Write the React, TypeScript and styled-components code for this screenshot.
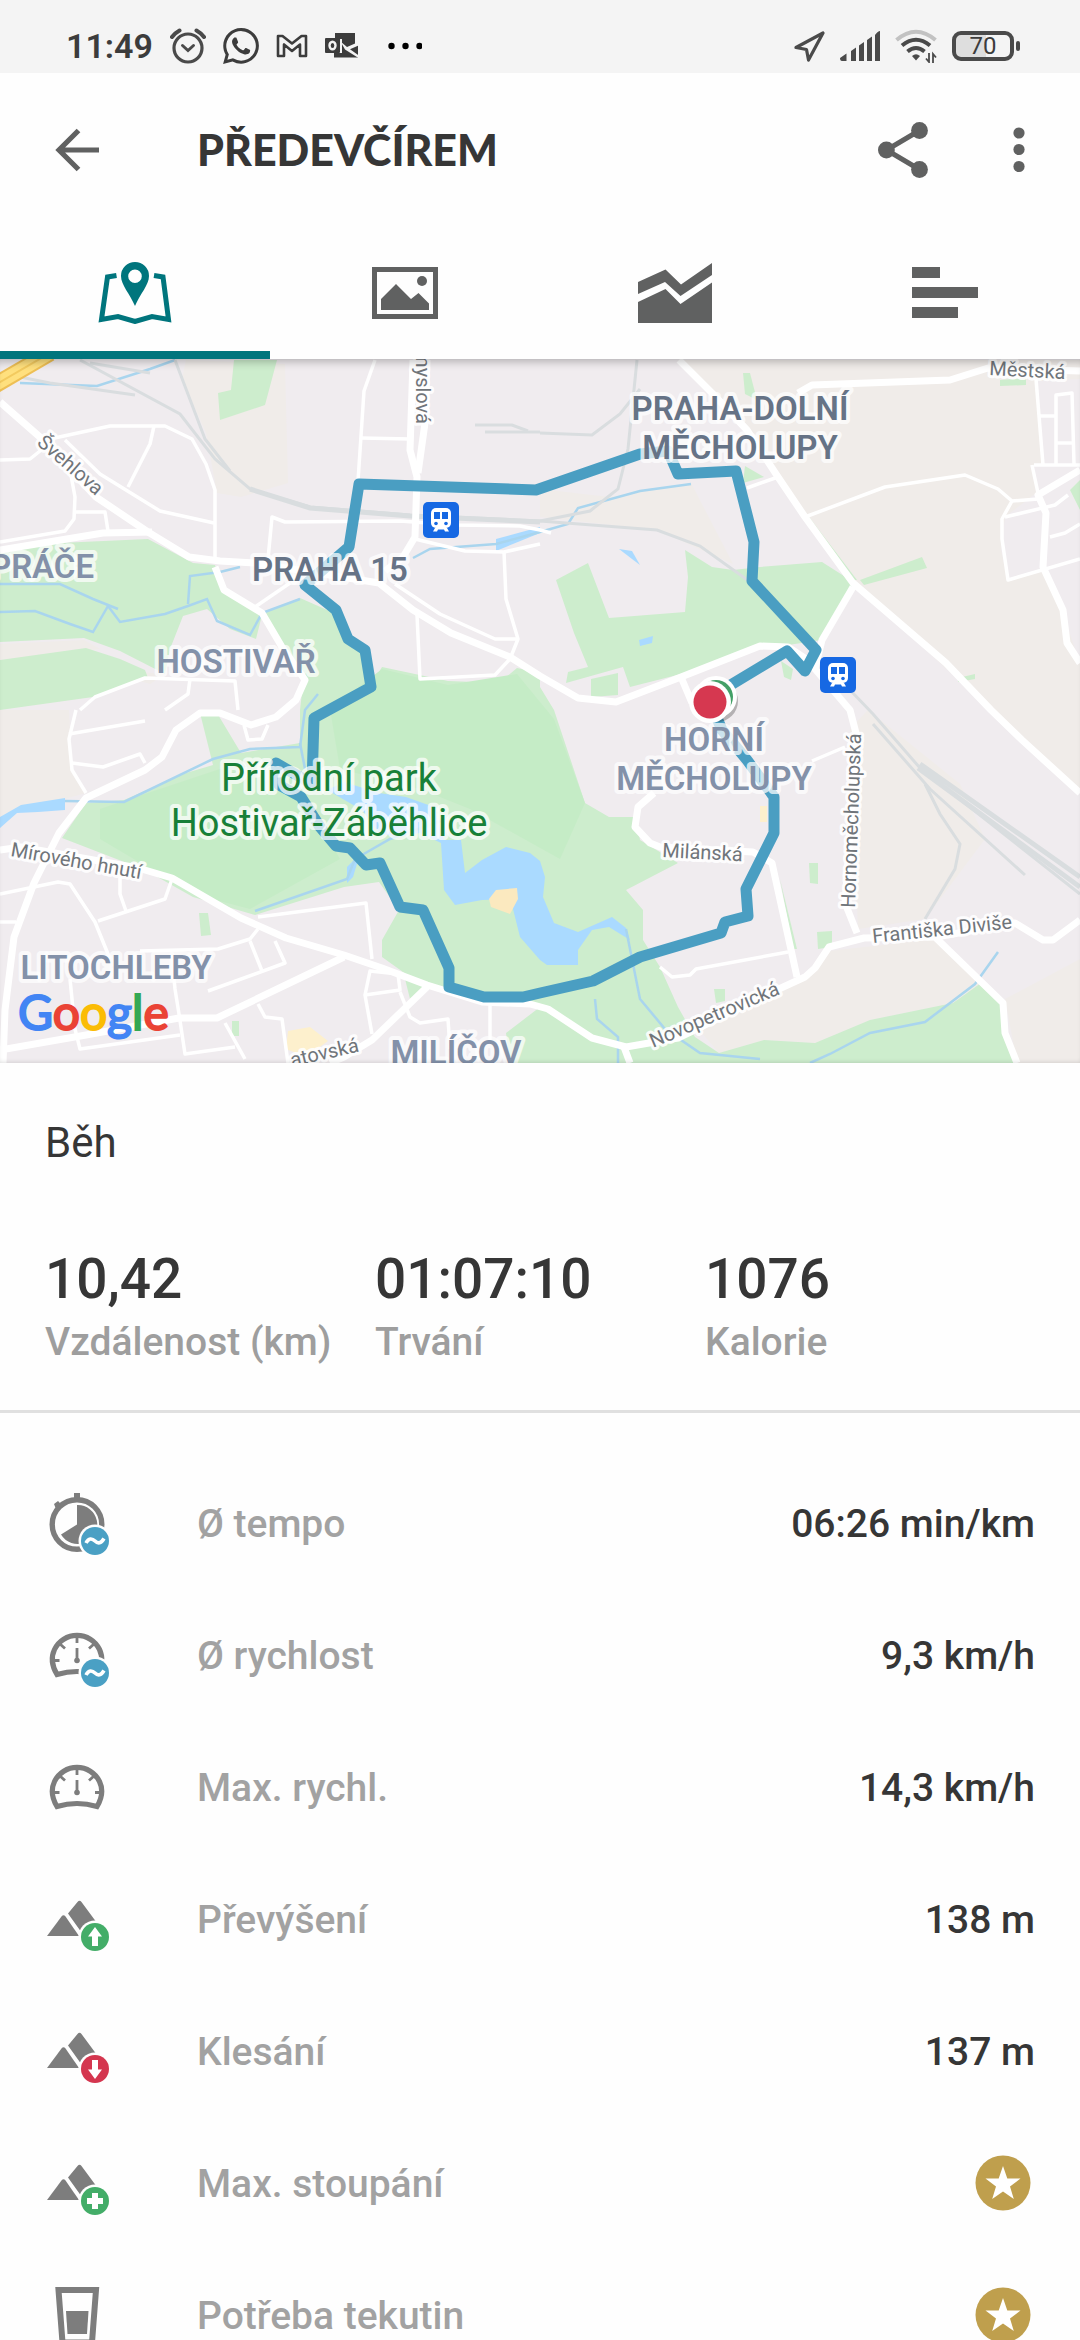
import React from "react";
import styled, { createGlobalStyle } from "styled-components";

const GlobalStyle = createGlobalStyle`
  *, *::before, *::after { box-sizing: border-box; }
  body { margin: 0; background: #fefefe; font-family: Roboto, "Noto Sans", sans-serif; }
`;

const Screen = styled.div`
  height: 100vh;
  display: flex;
  flex-direction: column;
  overflow: hidden;
  background: #fefefe;
  color: #363636;
`;

const StatusBar = styled.div`
  flex: none;
  display: flex;
  align-items: center;
  justify-content: space-between;
  height: 73px;
  padding: 19px 60px 0 66px;
  background: #f4f4f4;
  color: #3c3c3c;
`;

const StatusGroup = styled.div<{ $gap: number }>`
  display: flex;
  align-items: center;
  gap: ${(p) => p.$gap}px;
  svg { display: block; }
`;

const Clock = styled.span`
  font-size: 34px;
  line-height: 40px;
  font-weight: 600;
`;

const Overflow = styled.span`
  padding-left: 12px;
`;

const Battery = styled.span`
  display: flex;
  align-items: center;
  gap: 2px;
  &::after {
    content: "";
    width: 4px;
    height: 10px;
    border-radius: 2px;
    background: #4a4a4a;
  }
`;

const BatteryBody = styled.span`
  display: flex;
  align-items: center;
  justify-content: center;
  width: 62px;
  height: 30px;
  border: 4px solid #4a4a4a;
  border-radius: 9px;
  background: linear-gradient(90deg, #dedede 55%, #f4f4f4 55%);
  font-size: 24px;
  line-height: 24px;
`;

const AppBar = styled.header`
  flex: none;
  display: flex;
  align-items: center;
  height: 154px;
  padding: 0 36px 0 44px;
`;

const IconButton = styled.button<{ $width: number }>`
  flex: none;
  display: flex;
  align-items: center;
  justify-content: center;
  width: ${(p) => p.$width}px;
  height: 66px;
  padding: 0;
  border: 0;
  background: none;
  color: #606161;
  cursor: pointer;
`;

const Title = styled.h1`
  flex: 1;
  margin: 0 0 0 87px;
  font-family: Lato, Roboto, sans-serif;
  font-size: 43px;
  line-height: 52px;
  font-weight: 900;
  color: #363636;
`;

const Actions = styled.div`
  display: flex;
  gap: 58px;
`;

const Tabs = styled.div`
  flex: none;
  display: grid;
  grid-template-columns: repeat(4, 1fr);
  height: 132px;
`;

const Tab = styled.button<{ $active?: boolean }>`
  display: flex;
  align-items: center;
  justify-content: center;
  padding: 0;
  border: 0;
  background: none;
  color: ${(p) => (p.$active ? "#00757d" : "#606161")};
  box-shadow: ${(p) => (p.$active ? "inset 0 -8px #00757d" : "none")};
  cursor: pointer;
`;

const MapPanel = styled.div`
  flex: none;
  position: relative;
  height: 704px;
  overflow: hidden;
  background: #f0ecef;
  svg { display: block; width: 100%; height: 100%; }
  &::after {
    content: "";
    position: absolute;
    inset: 0;
    pointer-events: none;
    box-shadow: inset 0 9px 8px -6px rgba(0, 0, 0, 0.25), inset 0 -4px 4px -3px rgba(0, 0, 0, 0.12);
  }
`;

const District = styled.text<{ $tone?: string }>`
  font: 600 33px Roboto, "Noto Sans", sans-serif;
  fill: ${(p) => p.$tone ?? "#8391a9"};
  stroke: rgba(255, 255, 255, 0.72);
  stroke-width: 8px;
  stroke-linejoin: round;
  paint-order: stroke;
  text-anchor: middle;
`;

const ParkName = styled(District)`
  font-weight: 400;
  font-size: 38px;
  fill: #188038;
`;

const Street = styled.text`
  font: 400 20px Roboto, "Noto Sans", sans-serif;
  fill: #70757a;
  stroke: rgba(255, 255, 255, 0.9);
  stroke-width: 6px;
  stroke-linejoin: round;
  paint-order: stroke;
`;

const Wordmark = styled.text`
  font: 400 48px Lato, Roboto, sans-serif;
  stroke-width: 2px;
`;

const Summary = styled.section`
  flex: none;
  padding: 54px 45px 41px;
  border-bottom: 3px solid #e0e0e0;
`;

const Sport = styled.h2`
  margin: 0 0 78px;
  font-size: 42px;
  line-height: 52px;
  font-weight: 400;
`;

const Totals = styled.dl`
  display: grid;
  grid-template-columns: repeat(3, 1fr);
  margin: 0;
`;

const Total = styled.div`
  display: flex;
  flex-direction: column-reverse;
  gap: 4px;
  white-space: nowrap;
`;

const TotalLabel = styled.dt`
  font-size: 39px;
  line-height: 54px;
  font-weight: 500;
  color: #9e9e9e;
`;

const TotalValue = styled.dd`
  margin: 0;
  font-size: 55px;
  line-height: 64px;
  font-weight: 500;
`;

const Details = styled.ul`
  flex: 1;
  min-height: 0;
  margin: 0;
  padding: 45px 45px 0;
  overflow-y: auto;
  scrollbar-width: none;
  list-style: none;
`;

const Detail = styled.li`
  display: flex;
  align-items: center;
  height: 132px;
  font-size: 39px;
  line-height: 48px;
  font-weight: 500;
  svg { flex: none; display: block; }
`;

const DetailLabel = styled.span`
  flex: 1;
  margin-left: 88px;
  color: #a2a2a2;
`;

/* ---------- status icons ---------- */

const AlarmIcon = () => (
  <svg width="36" height="36" viewBox="0 0 36 36" fill="none" stroke="#4a4a4a" strokeWidth="3.2" strokeLinecap="round">
    <circle cx="18" cy="20" r="14" />
    <path d="M12.5 17.5l5.5 5 5.500-5" strokeWidth="3" />
    <path d="M2 9q3-4 7.500-6.500M34 9q-3-4-7.500-6.500" strokeWidth="4" />
  </svg>
);

const WhatsAppIcon = () => (
  <svg width="36" height="36" viewBox="0 0 24 24" fill="#3c3c3c">
    <path d="M17.47 14.38c-.3-.15-1.760-.87-2.030-.97-.27-.1-.47-.15-.67.15-.2.300-.77.970-.94 1.160-.17.200-.35.230-.64.080-.3-.15-1.260-.46-2.390-1.480-.88-.79-1.480-1.760-1.650-2.060-.17-.3-.02-.46.13-.6.130-.14.300-.35.440-.53.150-.17.200-.3.300-.5.100-.2.050-.37-.02-.52-.08-.15-.67-1.610-.92-2.210-.24-.58-.49-.5-.67-.51h-.57c-.2 0-.52.070-.79.370-.27.300-1.040 1.020-1.040 2.480s1.060 2.880 1.210 3.070c.15.200 2.100 3.200 5.080 4.490.71.310 1.260.490 1.690.630.710.230 1.360.190 1.870.120.570-.09 1.760-.72 2.010-1.410.25-.69.250-1.290.17-1.410-.07-.13-.27-.2-.57-.35M12.050 21.790a9.870 9.870 0 0 1-5.030-1.380l-.36-.21-3.740.980 1-3.650-.24-.37a9.860 9.860 0 1 1 8.370 4.630m8.410-18.300A11.820 11.820 0 0 0 12.050 0C5.500 0 .16 5.340.16 11.890c0 2.100.550 4.140 1.590 5.950L.06 24l6.300-1.650a11.880 11.880 0 0 0 5.690 1.450c6.550 0 11.890-5.340 11.890-11.890a11.820 11.820 0 0 0-3.480-8.420" />
  </svg>
);

const MailIcon = () => (
  <svg width="32" height="24" viewBox="0 0 32 24" fill="none" stroke="#3c3c3c" strokeWidth="2.6" strokeLinejoin="round">
    <path d="M2 2h4.500L16 9.500 25.500 2H30v20h-6V10.500L16 17l-8-6.500V22H2z" />
  </svg>
);

const OutlookIcon = () => (
  <svg width="34" height="28" viewBox="0 0 34 28">
    <path d="M10 1h20v12l3-1.500v14H9V21h8V7h-7z" fill="#3c3c3c" />
    <path d="M15.500 9.500 22 15l11.500-5v3.500L25 17.200l8.500 6V26L20 17.500z" fill="#f4f4f4" />
    <rect x="0" y="6" width="15" height="15" rx="1" fill="#3c3c3c" />
    <ellipse cx="7.500" cy="13.500" rx="3" ry="3.800" fill="none" stroke="#f4f4f4" strokeWidth="2.400" />
  </svg>
);

const MoreDots = () => (
  <svg width="34" height="8" viewBox="0 0 34 8">
    <circle cx="3.500" cy="4" r="3.200" /><circle cx="17.500" cy="4" r="3.200" /><circle cx="31.500" cy="4" r="3.200" />
  </svg>
);

const LocationIcon = () => (
  <svg width="31" height="31" viewBox="0 0 31 31" fill="none" stroke="#4a4a4a" strokeWidth="3.200" strokeLinejoin="round">
    <path d="M2 16.500 29 2 14.500 29 12.500 18.500z" />
  </svg>
);

const SignalIcon = () => (
  <svg width="40" height="30" viewBox="0 0 40 30" fill="#4a4a4a">
    <path d="M0 27l6.500-4.500V30H2q-2 0-2-3zM11 20l5-3.500V30h-5zM19 14.500l5-3.500V30h-5zM27 9l5-3.500V30h-5zM35 4q3-4 5-4v30h-5z" />
  </svg>
);

const WifiIcon = () => (
  <svg width="42" height="34" viewBox="0 0 42 34" fill="none" stroke="#4a4a4a" strokeWidth="4">
    <path d="M1.500 11Q21-5.500 40.500 11" stroke="#c2c2c2" />
    <path d="M7 16.500q14-11.500 28 0" />
    <path d="M12.500 22.500q8.500-7 17 0" />
    <path d="M17 27q4-3.500 8 0l-4 4.500z" fill="#4a4a4a" stroke="none" />
    <path d="M34 24v9l-3-3.500M38 34v-9l3 3.500" strokeWidth="1.800" />
  </svg>
);

/* ---------- toolbar and tab icons ---------- */

const BackIcon = () => (
  <svg width="44" height="44" viewBox="0 0 44 44" fill="none" stroke="currentColor" strokeWidth="5.200">
    <path d="M23.500 2.500 4 22l19.500 19.500M4 22h40" />
  </svg>
);

const ShareIcon = () => (
  <svg width="50" height="56" viewBox="0 0 50 56" fill="currentColor">
    <path d="M41.500 8.500 8.500 28l33 19.500" fill="none" stroke="currentColor" strokeWidth="5" />
    <circle cx="41.500" cy="8.500" r="8.400" /><circle cx="8.400" cy="28" r="8.400" /><circle cx="41.500" cy="47.500" r="8.400" />
  </svg>
);

const KebabIcon = () => (
  <svg width="12" height="46" viewBox="0 0 12 46" fill="currentColor">
    <circle cx="6" cy="6" r="5.600" /><circle cx="6" cy="22.500" r="5.600" /><circle cx="6" cy="39.500" r="5.600" />
  </svg>
);

const MapIcon = () => (
  <svg width="74" height="62" viewBox="0 0 74 62">
    <path d="M18.500 13.500 9.500 15 3.500 57.500 20 54.500 37 59.500 54 54.500 70.500 57.500 65 15 56 13.500" fill="none" stroke="currentColor" strokeWidth="5" />
    <path fillRule="evenodd" fill="currentColor" d="M37 0a14 14 0 0 1 14 14c0 9-9 18-14 30-5-12-14-21-14-30A14 14 0 0 1 37 0zm0 7.500a6.800 6.800 0 1 0 0 13.600 6.800 6.800 0 0 0 0-13.600z" />
  </svg>
);

const PictureIcon = () => (
  <svg width="66" height="52" viewBox="0 0 66 52" fill="currentColor">
    <rect x="2.500" y="2.500" width="61" height="47" fill="none" stroke="currentColor" strokeWidth="5" />
    <path d="M9 43V32L24 17 39 32 46.500 26 57 36.500V43z" /><circle cx="50" cy="14" r="5" />
  </svg>
);

const ChartIcon = () => (
  <svg width="74" height="62" viewBox="0 0 74 62" fill="currentColor">
    <path d="M0 20 27.500 7.500 43 22.500 74 1V13L42.500 34 27 20 0 32z" />
    <path d="M0 40 27.500 27 42.500 42 74 20.500V61H0z" />
  </svg>
);

const BarsIcon = () => (
  <svg width="66" height="52" viewBox="0 0 66 52" fill="currentColor">
    <path d="M0 0h28v11H0zM0 20h66v11H0zM0 40h46v11H0z" />
  </svg>
);

/* ---------- detail icons ---------- */

type BadgeKind = "average" | "up" | "down" | "plus";

const badgeColors: Record<BadgeKind, string> = { average: "#4aa0c4", up: "#43ad68", down: "#d4364f", plus: "#43ad68" };

const badgeMarks: Record<BadgeKind, React.ReactNode> = {
  average: <path d="M41 51c2.500-5 6-5 9-2s6 2.500 9-2.500" fill="none" stroke="#fff" strokeWidth="3.600" />,
  up: <path d="M50 39l7 9.500h-4V58h-6v-9.500h-4z" fill="#fff" />,
  down: <path d="M50 59l7-9.500h-4V40h-6v9.500h-4z" fill="#fff" />,
  plus: <path d="M47 41h6v5h5v6h-5v5h-6v-5h-5v-6h5z" fill="#fff" />,
};

const Badge = ({ kind }: { kind: BadgeKind }) => (
  <>
    <circle cx="50" cy="49" r="16.500" fill="#fefefe" />
    <circle cx="50" cy="49" r="14" fill={badgeColors[kind]} />
    {badgeMarks[kind]}
  </>
);

const DetailSvg = ({ children }: { children: React.ReactNode }) => (
  <svg width="64" height="64" viewBox="0 0 64 64" fill="#7d7d7d">{children}</svg>
);

const StopwatchIcon = () => (
  <DetailSvg>
    <circle cx="32" cy="32.500" r="24.800" fill="none" stroke="#7d7d7d" strokeWidth="5.400" />
    <path d="M29 1h6v5h-6zM9 12l4-3 3 3-5 5z" />
    <path d="M32 32.500V13a19.500 19.500 0 1 1-16 29.500z" />
    <Badge kind="average" />
  </DetailSvg>
);

const GaugeIcon = ({ badge }: { badge?: BadgeKind }) => (
  <DetailSvg>
    <path d="M12 50.500Q4 37 9.500 25.500A25 25 0 0 1 54.500 25.500Q60 37 52 50.500Q32 44.500 12 50.500z" fill="none" stroke="#7d7d7d" strokeWidth="5.200" />
    <path d="M32 13v6M6 36.500h8.500M50 36.500h8M15 20l5 4.500M49 20l-5 4.500M32 24v12" stroke="#7d7d7d" strokeWidth="2.800" />
    <circle cx="32" cy="36.500" r="2.800" />
    {badge && <Badge kind={badge} />}
  </DetailSvg>
);

const MountainIcon = ({ badge }: { badge: BadgeKind }) => (
  <DetailSvg>
    <path d="M2 48 16.500 28.500q2-2.500 4 0L34 48z" />
    <path d="M23 25.500 32.500 14q2-2.500 4 0L52 35 35.500 43z" />
    <Badge kind={badge} />
  </DetailSvg>
);

const GlassIcon = () => (
  <DetailSvg>
    <path d="M13.500 6h37.500L47 58.500H17.500z" fill="none" stroke="#7d7d7d" strokeWidth="6" />
    <path d="M21 27h22.500L42 50H22.500z" />
  </DetailSvg>
);

const PremiumStar = () => (
  <svg width="64" height="64" viewBox="0 0 64 64" role="img" aria-label="Premium">
    <circle cx="32" cy="31" r="27.500" fill="#bf9f4d" />
    <path d="M32 14l4.300 12.500H49.500L39 34.500l3.800 12.500L32 39.500 21.200 47 25 34.500 14.500 26.500h13.200z" fill="#fff" />
  </svg>
);

/* ---------- map ---------- */

const parks = [
  "0,193 59,184 148,180 193,204 215,206 222,229 248,248 262,256 256,280 230,270 207,250 183,257 170,290 165,315 120,292 84,279 0,283",
  "0,301 86,289 120,300 145,311 148,319 93,338 0,351",
  "265,254 300,239 334,254 344,281 365,291 374,321 382,308 448,322 499,324 517,309 540,314 540,328 554,351 585,444 609,458 636,458 640,481 678,504 626,531 643,551 643,581 660,608 678,648 695,678 719,694 764,681 815,684 870,661 953,644 981,624 1001,644 1005,674 1017,704 510,704 506,674 540,648 484,645 448,634 410,618 382,598 382,581 399,551 379,523 344,528 255,556 193,538 145,511 62,479 86,444 124,441 186,414 213,406 200,354 217,354 241,394 300,384 300,351 303,324 282,284",
  "556,221 588,204 609,259 685,253 688,218 685,191 712,208 733,211 760,208 822,203 855,224 822,281 788,286 760,288 685,314 630,328 623,308 566,324 568,313 588,308 574,274",
  "234,1 277,1 265,46 220,61 218,34 231,31",
  "591,320 618,314 618,336 591,338",
  "743,14 750,14 757,41 745,35",
  "745,107 764,118 743,124",
  "809,158 857,221 850,221 809,164",
  "860,221 922,198 927,209 864,226",
  "1070,131 1080,121 1080,151",
  "1000,21 1026,19 1026,26 1000,27",
  "781,302 793,310 791,321 784,318",
  "958,319 975,315 975,320 958,323",
  "199,554 208,554 211,576 201,577",
  "817,573 832,572 832,588 818,590",
  "809,504 818,504 818,525 810,524",
  "714,630 725,630 725,642 716,644",
  "780,520 797,590 793,590",
  "405,620 427,627 410,640",
  "232,662 239,662 239,677 232,677",
];

const fields = [
  "186,1 285,5 288,124 241,138 217,134 206,74 182,20",
  "679,1 1080,1 1080,20 1036,22 1043,105 1034,106 1036,134 1005,158 1001,191 1008,221 1043,211 1063,254 1080,305 1080,434 991,351 853,224 790,135 747,71",
  "609,138 691,124 733,205 657,171 540,158 540,130",
  "0,351 69,351 72,411 86,434 0,458",
  "868,351 960,425 985,480 925,560 858,570 850,370",
  "829,592 936,580 1003,644 953,644 870,661 815,684 764,681 719,694 690,660 797,625",
  "1005,640 1080,600 1080,704 1017,704",
  "0,285 84,281 100,290 0,301",
  "100,310 165,315 150,325",
];

const lakes = [
  "327,431 344,423 379,434 406,438 434,448 444,481 461,481 465,514 482,501 506,488 530,494 540,502 545,518 543,538 554,564 578,573 612,558 626,569 630,581 609,568 592,571 578,591 578,606 547,606 540,601 520,578 513,550 513,540 482,541 455,546 444,531 441,484 420,474 396,478 379,474 362,451",
  "0,458 21,446 65,439 65,451 38,453 17,454 0,469",
  "619,190 632,192 640,206 632,200",
  "639,281 653,277 652,284 640,287",
  "496,180 540,168 540,174 496,192",
  "347,508 360,495 353,518 347,524",
];

const streams = [
  "0,253 35,252 70,265 93,273 108,247 120,263 165,255 188,247 207,240 217,262 250,276 262,254 300,240",
  "0,225 60,225 93,240 118,250",
  "188,245 190,217 220,213 240,208",
  "20,24 97,27 150,10 175,1",
  "413,199 430,190 496,185 540,173 568,165 578,149 640,132 691,125",
  "65,442 124,443 213,400 250,390 300,388 305,351 318,335",
  "441,462 390,480 355,500 347,520 255,552",
  "626,570 640,640 665,670 700,694 760,700",
  "595,640 597,660 618,678 618,704",
  "998,593 975,625 925,663 870,674 830,695 810,704",
  "300,384 305,410",
];

const rails = [
  "80,1 180,55 215,100 250,130 310,148 410,156 540,162 657,171 700,187 760,230",
  "175,1 205,80 230,112",
  "0,14 50,24 135,36",
  "90,4 150,14",
  "637,1 628,90 618,130 590,152 540,162",
  "540,74 592,76 620,55 640,30",
  "475,66 512,66 528,72",
  "485,73 540,73",
  "760,230 830,310 873,355 920,409 1080,535",
  "873,365 930,430 1025,516",
  "925,425 940,455 960,485 955,510 925,560",
];

const mainRoads = [
  "0,43 41,79 96,138 148,173 189,198 220,202 255,204 379,224 413,251 451,274 510,298 540,317 578,339 616,343 681,318 760,287 788,288 812,304",
  "0,191 103,174 152,173",
  "413,1 410,91 417,118 415,178 403,198 385,212",
  "427,1 425,64 418,114",
  "215,208 224,231 262,254 282,288 305,321 296,341 276,358 251,366 220,354 200,354 176,371 162,398 145,411 86,439 59,474 34,524 14,578 5,651 3,704",
  "0,491 21,488 138,509 172,519 241,559 286,579 344,596 382,609 427,626 482,643 530,645 548,650 592,679 626,688 678,679 781,629 805,618 815,609 829,588 864,579 936,578 1015,564 1043,581 1053,581 1080,561",
  "0,691 86,676 179,659 217,659 344,598",
  "427,628 372,681 344,698 330,704",
  "679,1 712,34 747,71 778,118 805,158 853,224 946,304 991,351 1022,381 1080,434",
  "853,228 822,281 815,310 850,351 857,378 845,544 857,574",
  "798,34 812,26 950,21 988,9 1080,12",
  "1080,111 1038,136 1046,154 1043,208 1063,251 1067,284 1080,304",
  "654,434 638,448 635,468 650,484 660,488 753,493 772,504 797,618",
  "936,579 1003,644 1005,674 1017,704",
  "681,318 692,344",
  "624,688 630,704",
];

const sideRoads = [
  "50,80 110,67 165,67 192,80 206,105 215,131 215,204",
  "65,81 100,115 160,152 214,164",
  "154,67 150,85 128,128",
  "0,101 30,100 45,88",
  "68,100 75,138 74,160 65,172 0,183",
  "76,153 105,153 108,172",
  "375,1 364,32 358,122",
  "361,79 410,80",
  "268,200 272,158 285,163 400,162 455,166 520,167 540,171 551,174",
  "415,180 465,192 504,193 540,185",
  "504,193 506,240 518,280 510,300",
  "518,280 495,280 440,255 395,225",
  "417,256 420,320 495,316 510,300",
  "255,248 290,224",
  "80,351 95,338 145,319 235,322 238,351",
  "190,320 188,335 165,351",
  "69,375 145,362",
  "76,351 69,380 72,411 86,434",
  "72,404 103,408 140,395 145,404",
  "244,366 248,381 262,380 268,366",
  "0,535 58,523 70,525 95,563 110,600",
  "120,518 120,535 126,552",
  "98,562 165,540 172,520",
  "0,563 16,563",
  "140,592 218,590 250,580 258,570",
  "208,632 285,604 275,582",
  "250,582 262,612",
  "172,600 175,630 179,655 185,695 235,688",
  "70,620 75,670 80,690 180,676",
  "225,664 245,700",
  "258,645 265,658 282,660 288,704",
  "365,636 400,631 398,615 370,612 365,636 372,675",
  "400,633 410,658 420,664 448,660 450,690",
  "490,645 490,685",
  "258,558 366,544 372,600",
  "747,129 778,118",
  "805,158 885,128 965,116 998,130 1012,142 1038,140",
  "1034,106 1080,106",
  "1036,20 1043,106",
  "1040,57 1056,57",
  "1056,84 1073,84",
  "1056,105 1056,36 1072,34 1074,105",
  "1032,106 1038,134",
  "1012,142 1002,160 1002,180 1008,221 1080,200",
  "1005,158 1055,146 1068,136",
  "1050,178 1065,174 1080,165",
  "660,608 672,618 690,616 696,610 788,593",
  "812,402 845,388",
];

const toPath = (points: string) => "M" + points.split(" ").join("L");

const route =
  "M711 345 722 371 747 401 769 431 774 438V474L746 530 748 557 725 563 721 574 640 598 593 622 540 634 523 638H484L449 628V609L423 551 400 548 380 504 366 506 350 489 336 487 320 468 301 438 279 426 276 404 312 425 314 359 371 328 365 291 348 280 336 251 305 226 349 188 359 125 536 131 640 95 668 92 678 115 736 112 754 183 752 222 816 291 805 312 787 292 724 330";

const Station = ({ x, y }: { x: number; y: number }) => (
  <g transform={`translate(${x} ${y})`}>
    <rect width="36" height="36" rx="5" fill="#1668e3" />
    <rect x="8" y="6" width="20" height="20" rx="5" fill="#fff" />
    <path d="M11 10h6v7h-6zM19 10h6v7h-6z" fill="#1668e3" />
    <circle cx="13" cy="21.500" r="1.800" fill="#1668e3" /><circle cx="23" cy="21.500" r="1.800" fill="#1668e3" />
    <path d="M12 26l-2 3.500h4l1-2h6l1 2h4L24 26z" fill="#fff" />
  </g>
);

const RouteMap = () => (
  <svg viewBox="0 0 1080 704" preserveAspectRatio="xMidYMid slice" role="img" aria-label="Mapa trasy">
    {fields.map((p) => <polygon key={p} points={p} fill="#f0ece9" />)}
    {parks.map((p) => <polygon key={p} points={p} fill="#cdedcd" />)}
    <path d="M382 310 448 326 517 315 554 360 585 444 560 500 470 450 420 430 340 410 330 350zM100 450 220 410 300 430 340 500 250 550 193 535 100 480z" fill="#c5ecc6" />
    {lakes.map((p) => <polygon key={p} points={p} fill="#aadaff" />)}
    <path d="M489 540 496 531 517 529 518 540 510 555 491 548z" fill="#fbe9bf" />
    <path d="M760 447h7v16h-7zM288 672l22-4 18 14-22 16-20-8z" fill="#fdf0cd" />
    <g fill="none" stroke="#a9d5ee" strokeWidth="2.500">
      {streams.map((p) => <path key={p} d={toPath(p)} />)}
    </g>
    <g fill="none" stroke="#d9dddf" strokeWidth="3">
      {rails.map((p) => <path key={p} d={toPath(p)} />)}
      <path d="M250 130 310 149 410 157 540 163M918 409 1080 528M920 405 1080 518" strokeWidth="5" />
    </g>
    <g fill="none" stroke="#fff" strokeLinejoin="round">
      <g strokeWidth="3.500">{sideRoads.map((p) => <path key={p} d={toPath(p)} />)}</g>
      <g strokeWidth="7">{mainRoads.map((p) => <path key={p} d={toPath(p)} />)}</g>
    </g>
    <path d="M-5 26 50-6" stroke="#eebf55" strokeWidth="17" />
    <path d="M-5 26 50-6" stroke="#ffe07e" strokeWidth="13" />
    <path d="M-5 26 50-6" stroke="#f3ca5f" strokeWidth="2" />

    <path d={route} fill="none" stroke="#4a9ec2" strokeWidth="11" strokeLinejoin="round" />

    <Street transform="translate(36 85) rotate(41)">Švehlova</Street>
    <Street transform="translate(416 65) rotate(90)" textAnchor="end">Průmyslová</Street>
    <Street transform="translate(989 16) rotate(3)">Městská</Street>
    <Street transform="translate(10 497) rotate(10)">Mírového hnutí</Street>
    <Street transform="translate(662 498) rotate(3)">Milánská</Street>
    <Street transform="translate(855 549) rotate(-88)">Hornoměcholupská</Street>
    <Street transform="translate(873 584) rotate(-6)">Františka Diviše</Street>
    <Street transform="translate(653 689) rotate(-23)">Novopetrovická</Street>
    <Street transform="translate(292 708) rotate(-13)">atovská</Street>

    <District x="740" y="61" $tone="#667386">PRAHA-DOLNÍ</District>
    <District x="740" y="100" $tone="#667386">MĚCHOLUPY</District>
    <District x="330" y="222" $tone="#667386">PRAHA 15</District>
    <District x="42" y="219">PRÁČE</District>
    <District x="236" y="314">HOSTIVAŘ</District>
    <District x="714" y="392">HORNÍ</District>
    <District x="714" y="431">MĚCHOLUPY</District>
    <District x="116" y="620">LITOCHLEBY</District>
    <District x="456" y="705">MILÍČOV</District>
    <ParkName x="329" y="432">Přírodní park</ParkName>
    <ParkName x="329" y="477">Hostivař-Záběhlice</ParkName>

    <Station x={423} y={143} />
    <Station x={820} y={298} />

    <circle cx="717" cy="342" r="21" fill="#000" opacity="0.25" />
    <circle cx="716" cy="338" r="21" fill="#fff" />
    <circle cx="716" cy="338" r="17" fill="#43a067" />
    <circle cx="710" cy="343" r="21" fill="#fff" />
    <circle cx="710" cy="343" r="16.500" fill="#d63850" />

    <Wordmark x="18" y="671">
      <tspan fill="#4285f4" stroke="#4285f4">G</tspan>
      <tspan fill="#ea4335" stroke="#ea4335">o</tspan>
      <tspan fill="#fbbc05" stroke="#fbbc05">o</tspan>
      <tspan fill="#4285f4" stroke="#4285f4">g</tspan>
      <tspan fill="#34a853" stroke="#34a853">l</tspan>
      <tspan fill="#ea4335" stroke="#ea4335">e</tspan>
    </Wordmark>
  </svg>
);

/* ---------- screen ---------- */

const totals = [
  { value: "10,42", label: "Vzdálenost (km)" },
  { value: "01:07:10", label: "Trvání" },
  { value: "1076", label: "Kalorie" },
];

const details = [
  { icon: <StopwatchIcon />, label: "Ø tempo", value: "06:26 min/km" },
  { icon: <GaugeIcon badge="average" />, label: "Ø rychlost", value: "9,3 km/h" },
  { icon: <GaugeIcon />, label: "Max. rychl.", value: "14,3 km/h" },
  { icon: <MountainIcon badge="up" />, label: "Převýšení", value: "138 m" },
  { icon: <MountainIcon badge="down" />, label: "Klesání", value: "137 m" },
  { icon: <MountainIcon badge="plus" />, label: "Max. stoupání", value: null },
  { icon: <GlassIcon />, label: "Potřeba tekutin", value: null },
];

export default function App() {
  return (
    <Screen>
      <GlobalStyle />
      <StatusBar>
        <StatusGroup $gap={17}>
          <Clock>11:49</Clock>
          <AlarmIcon />
          <WhatsAppIcon />
          <MailIcon />
          <OutlookIcon />
          <Overflow><MoreDots /></Overflow>
        </StatusGroup>
        <StatusGroup $gap={15}>
          <LocationIcon />
          <SignalIcon />
          <WifiIcon />
          <Battery><BatteryBody>70</BatteryBody></Battery>
        </StatusGroup>
      </StatusBar>
      <AppBar>
        <IconButton $width={66} aria-label="Zpět"><BackIcon /></IconButton>
        <Title>PŘEDEVČÍREM</Title>
        <Actions>
          <IconButton $width={66} aria-label="Sdílet"><ShareIcon /></IconButton>
          <IconButton $width={50} aria-label="Další možnosti"><KebabIcon /></IconButton>
        </Actions>
      </AppBar>
      <Tabs role="tablist">
        <Tab role="tab" $active aria-selected="true" aria-label="Mapa"><MapIcon /></Tab>
        <Tab role="tab" aria-selected="false" aria-label="Fotky"><PictureIcon /></Tab>
        <Tab role="tab" aria-selected="false" aria-label="Grafy"><ChartIcon /></Tab>
        <Tab role="tab" aria-selected="false" aria-label="Mezičasy"><BarsIcon /></Tab>
      </Tabs>
      <MapPanel><RouteMap /></MapPanel>
      <Summary>
        <Sport>Běh</Sport>
        <Totals>
          {totals.map((t) => (
            <Total key={t.label}>
              <TotalLabel>{t.label}</TotalLabel>
              <TotalValue>{t.value}</TotalValue>
            </Total>
          ))}
        </Totals>
      </Summary>
      <Details>
        {details.map((d) => (
          <Detail key={d.label}>
            {d.icon}
            <DetailLabel>{d.label}</DetailLabel>
            {d.value ? <span>{d.value}</span> : <PremiumStar />}
          </Detail>
        ))}
      </Details>
    </Screen>
  );
}
